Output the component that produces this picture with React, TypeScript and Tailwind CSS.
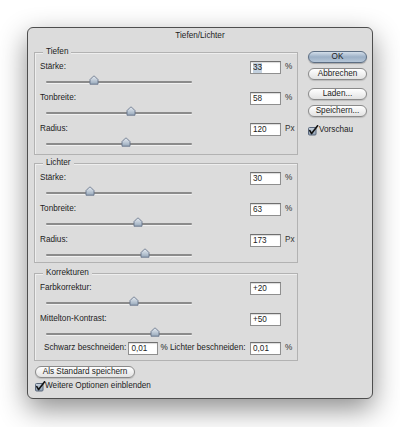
import React from "react";

type Row = { label: string; value: string; unit?: string; thumb: number; selected?: boolean };

const tiefen: Row[] = [
  { label: "Stärke:", value: "33", unit: "%", thumb: 94, selected: true },
  { label: "Tonbreite:", value: "58", unit: "%", thumb: 130.5 },
  { label: "Radius:", value: "120", unit: "Px", thumb: 125.5 },
];

const lichter: Row[] = [
  { label: "Stärke:", value: "30", unit: "%", thumb: 89.5 },
  { label: "Tonbreite:", value: "63", unit: "%", thumb: 137.5 },
  { label: "Radius:", value: "173", unit: "Px", thumb: 145 },
];

const korrekturen: Row[] = [
  { label: "Farbkorrektur:", value: "+20", thumb: 133.5 },
  { label: "Mittelton-Kontrast:", value: "+50", thumb: 155 },
];

function Thumb() {
  return (
    <svg width="10" height="10" viewBox="0 0 10 10">
      <defs>
        <linearGradient id="thumbFill" x1="0" y1="0" x2="0" y2="1">
          <stop offset="0" stopColor="#e6ebf1" />
          <stop offset="0.55" stopColor="#bcc8d5" />
          <stop offset="1" stopColor="#98a9bb" />
        </linearGradient>
      </defs>
      <path d="M1 9.2 V4.6 L4.4 1.2 Q5 0.6 5.6 1.2 L9 4.6 V9.2 Z" fill="url(#thumbFill)" stroke="#66748a" strokeWidth="0.9" strokeLinejoin="round" />
    </svg>
  );
}

function Slider({ thumb, short }: { thumb: number; short?: boolean }) {
  return (
    <div className={short ? "relative h-[15px]" : "relative h-[18px]"}>
      <div className="absolute left-[6px] top-[7px] h-[2px] w-[146px] rounded-full bg-[#8b8b8b] shadow-[0_1px_0_rgba(255,255,255,0.6)]" />
      <div className="absolute top-[1px]" style={{ left: thumb - 45 }}>
        <Thumb />
      </div>
    </div>
  );
}

function Field({ value, selected, w = "w-[31px]", className = "" }: { value: string; selected?: boolean; w?: string; className?: string }) {
  return (
    <div className={`${w} ${className} flex h-[13px] shrink-0 items-center border border-[#8f8f8f] border-t-[#6f6f6f] bg-white pl-[2px] shadow-[inset_0_1px_1px_rgba(0,0,0,0.15)]`}>
      <span className={selected ? "bg-[#c3d1df] leading-[10px]" : "leading-[10px]"}>{value}</span>
    </div>
  );
}

function FieldRow({ row }: { row: Row }) {
  return (
    <div className="flex h-[13px] items-center">
      <span className="flex-1">{row.label}</span>
      <Field value={row.value} selected={row.selected} />
      <span className="ml-[4px] w-[12px] text-[#333]">{row.unit}</span>
    </div>
  );
}

function Group({ title, className = "", children }: { title: string; className?: string; children: React.ReactNode }) {
  return (
    <div className={`relative border border-[#b2b2b2] pl-[5px] pt-[8px] shadow-[inset_1px_1px_0_rgba(255,255,255,0.5)] ${className}`}>
      <span className="absolute -top-[7px] left-[8px] bg-[#dcdcdc] px-[3px] leading-[12px]">{title}</span>
      {children}
    </div>
  );
}

function Button({ label, primary, className = "" }: { label: string; primary?: boolean; className?: string }) {
  return (
    <div
      className={`flex h-[12px] items-center justify-center rounded-full border leading-none ${
        primary
          ? "border-[#5d6e83] bg-gradient-to-b from-[#d3deea] via-[#9cb0c6] to-[#b5c6d8] shadow-[0_1px_1px_rgba(0,0,0,0.25)]"
          : "border-[#8a8a8a] bg-gradient-to-b from-white via-[#f1f1f1] to-[#e2e2e2] shadow-[0_1px_1px_rgba(0,0,0,0.15)]"
      } ${className}`}
    >
      {label}
    </div>
  );
}

function Checkbox() {
  return (
    <svg width="11" height="11" viewBox="0 0 11 11" className="shrink-0">
      <defs>
        <linearGradient id="cbFill" x1="0" y1="0" x2="0" y2="1">
          <stop offset="0" stopColor="#c9d3de" />
          <stop offset="1" stopColor="#8d9fb3" />
        </linearGradient>
      </defs>
      <rect x="0.5" y="2.5" width="7.5" height="7.5" rx="1" fill="url(#cbFill)" stroke="#59667a" />
      <path d="M1.8 5.6 L3.6 8.6 L9.6 0.8" fill="none" stroke="#111" strokeWidth="1.6" strokeLinecap="round" strokeLinejoin="round" />
    </svg>
  );
}

export default function App() {
  return (
    <div className="min-h-[427px] w-[400px] bg-white pl-[27px] pt-[27px] font-['Liberation_Sans',Arial,sans-serif] text-[8.2px] text-[#1c1c1c]">
      <div className="h-[372px] w-[346px] rounded-[6px] border border-[#4e4e4e] bg-[#dcdcdc] shadow-[0_10px_28px_rgba(0,0,0,0.45)]">
        <div className="h-[14px] pt-[1px] text-center leading-[13px]">Tiefen/Lichter</div>

        <div className="flex gap-[10px] pl-[6px]">
          {/* left column */}
          <div className="w-[264px] pt-[10px]">
            <Group title="Tiefen">
              {tiefen.map((r, i) => (
                <div key={i}>
                  <FieldRow row={r} />
                  <Slider thumb={r.thumb} />
                </div>
              ))}
            </Group>

            <Group title="Lichter" className="mt-[8px]">
              {lichter.map((r, i) => (
                <div key={i}>
                  <FieldRow row={r} />
                  <Slider thumb={r.thumb} short={i === 2} />
                </div>
              ))}
            </Group>

            <Group title="Korrekturen" className="mt-[10px] pb-[4px]">
              {korrekturen.map((r, i) => (
                <div key={i}>
                  <FieldRow row={r} />
                  <Slider thumb={r.thumb} short={i === 1} />
                </div>
              ))}
              <div className="flex h-[15px] items-center whitespace-nowrap pl-[4px]">
                <span>Schwarz beschneiden:</span>
                <Field value="0,01" w="w-[30px]" className="ml-[2px]" />
                <span className="ml-[2px]">% Lichter beschneiden:</span>
                <Field value="0,01" className="ml-auto" />
                <span className="ml-[4px] w-[12px] shrink-0 text-[#333]">%</span>
              </div>
            </Group>

            <Button label="Als Standard speichern" className="ml-[1px] mt-[5px] w-[100px]" />
            <div className="ml-[1px] mt-[2px] flex h-[12px] items-center">
              <Checkbox />
              <span className="ml-[-1px]">Weitere Optionen einblenden</span>
            </div>
          </div>

          {/* right column */}
          <div className="w-[59px] pt-[9px]">
            <Button label="OK" primary />
            <Button label="Abbrechen" className="mt-[5px]" />
            <Button label="Laden..." className="mt-[8px]" />
            <Button label="Speichern..." className="mt-[5px]" />
            <div className="mt-[7px] flex h-[12px] items-center">
              <Checkbox />
              <span>Vorschau</span>
            </div>
          </div>
        </div>
      </div>
    </div>
  );
}
